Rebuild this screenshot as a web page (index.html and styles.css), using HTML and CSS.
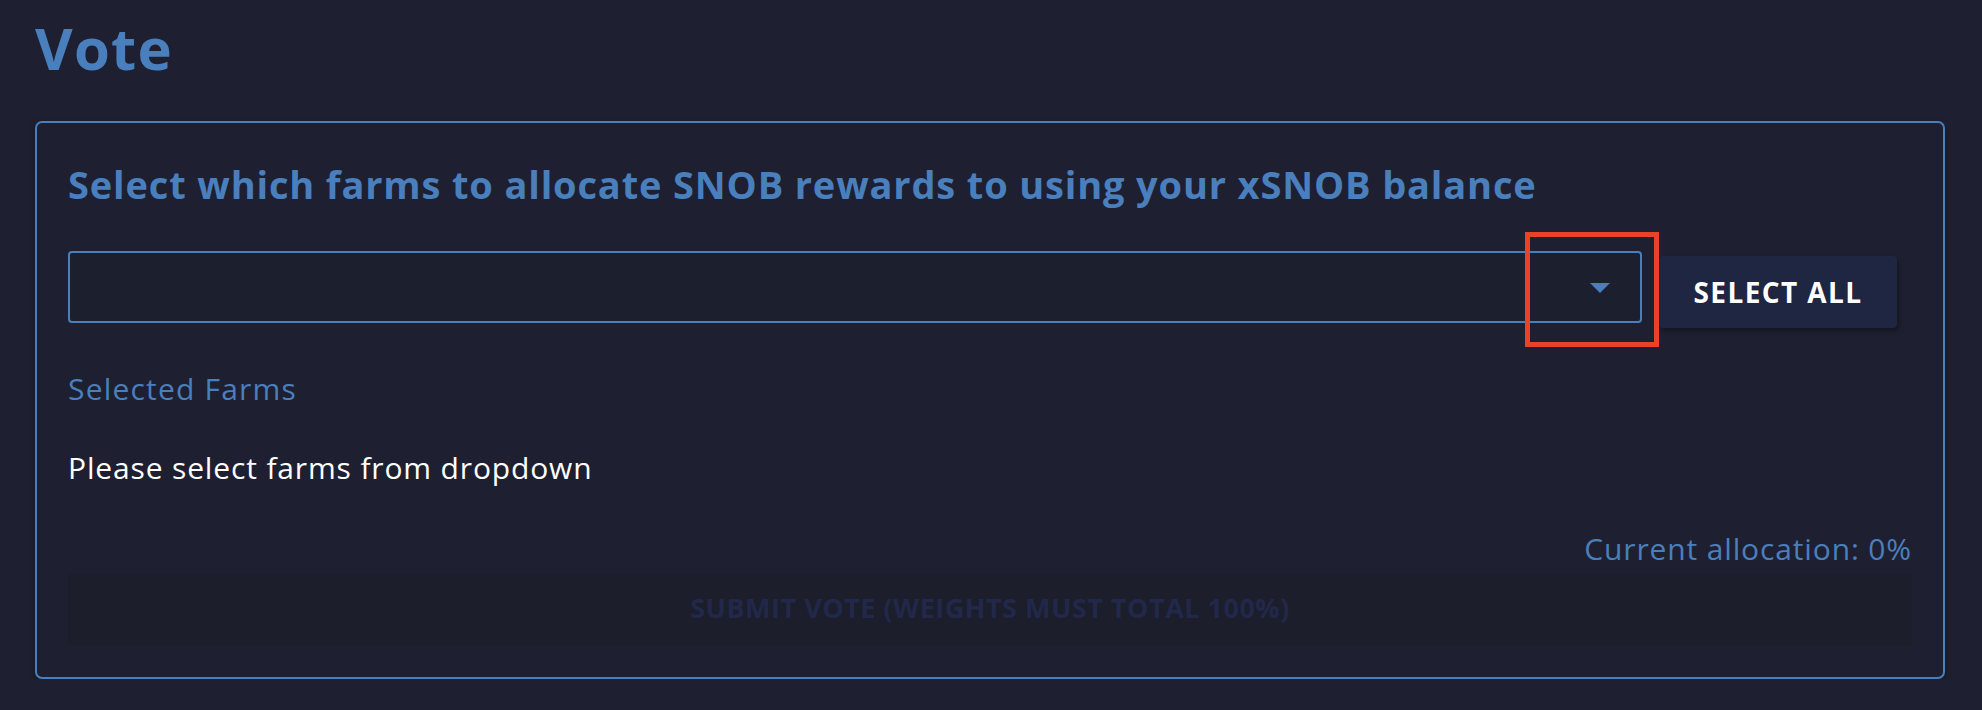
FILE: index.html
```html
<!DOCTYPE html>
<html lang="en">
<head>
<meta charset="utf-8">
<title>Vote</title>
<link rel="stylesheet" href="styles.css">
</head>
<body>
<main class="page">
  <h1 class="page-title">Vote</h1>
  <section class="card">
    <h2 class="card-title">Select which farms to allocate SNOB rewards to using your xSNOB balance</h2>
    <div class="select-row">
      <div class="dropdown">
        <span class="caret"></span>
      </div>
      <button class="btn-select-all">SELECT ALL</button>
      <span class="highlight"></span>
    </div>
    <p class="label">Selected Farms</p>
    <p class="empty">Please select farms from dropdown</p>
    <p class="allocation">Current allocation: 0%</p>
    <button class="btn-submit" disabled>SUBMIT VOTE (WEIGHTS MUST TOTAL 100%)</button>
  </section>
</main>
</body>
</html>
```

FILE: styles.css
```css
* { box-sizing: border-box; }

html, body {
  margin: 0;
  background: #1e2031;
}

body {
  font-family: "Open Sans", Roboto, "Liberation Sans", sans-serif;
  color: #ffffff;
}

.page {
  padding: 13px 37px 0 35px;
}

.page-title {
  margin: 0;
  font-size: 58px;
  line-height: 70px;
  font-weight: 700;
  color: #4a7fbd;
  letter-spacing: 1.2px;
}

.card {
  margin-top: 38px;
  border: 2px solid #4a7fbd;
  border-radius: 7px;
  background: #1e2031;
  padding: 38px 31px 31px 31px;
  box-shadow: 0 3px 6px rgba(0, 0, 0, 0.35);
}

.card-title {
  margin: 0;
  font-size: 38px;
  line-height: 46px;
  font-weight: 700;
  color: #4a7fbd;
  letter-spacing: 0.85px;
}

.select-row {
  position: relative;
  margin-top: 44px;
  display: flex;
  align-items: flex-start;
  gap: 17px;
  padding-right: 15px;
}

.dropdown {
  flex: 1;
  height: 72px;
  border: 2px solid #4a7fbd;
  border-radius: 4px;
  background: #1c1f2e;
  display: flex;
  align-items: center;
  justify-content: flex-end;
  padding-right: 30px;
}

.caret {
  width: 0;
  height: 0;
  border-left: 10px solid transparent;
  border-right: 10px solid transparent;
  border-top: 10px solid #4a7fbd;
  margin-top: 2px;
}

.btn-select-all {
  width: 238px;
  height: 72px;
  margin-top: 5px;
  border: none;
  border-radius: 4px;
  background: #1f2642;
  color: #ffffff;
  font-family: "Open Sans", Roboto, "Liberation Sans", sans-serif;
  font-size: 28px;
  font-weight: 700;
  letter-spacing: 1.4px;
  box-shadow: 2px 3px 5px rgba(0, 0, 0, 0.35);
}

.highlight {
  position: absolute;
  left: 1457px;
  top: -19px;
  width: 134px;
  height: 115px;
  border: 5px solid #e8432a;
  pointer-events: none;
}

.label {
  margin: 43px 0 0 0;
  font-size: 30px;
  line-height: 36px;
  color: #4a7fbd;
  letter-spacing: 1.2px;
}

.empty {
  margin: 43px 0 0 0;
  font-size: 30px;
  line-height: 36px;
  color: #ffffff;
  letter-spacing: 0.85px;
}

.allocation {
  margin: 45px 0 0 0;
  font-size: 30px;
  line-height: 36px;
  color: #4a7fbd;
  text-align: right;
  letter-spacing: 0.86px;
}

.btn-submit {
  display: block;
  width: 100%;
  height: 72px;
  margin-top: 7px;
  padding: 0 0 5px 0;
  border: none;
  border-radius: 2px;
  background: #1c1e2c;
  color: #22284a;
  font-family: "Open Sans", Roboto, "Liberation Sans", sans-serif;
  font-size: 27px;
  font-weight: 700;
  letter-spacing: 0.5px;
}
```
